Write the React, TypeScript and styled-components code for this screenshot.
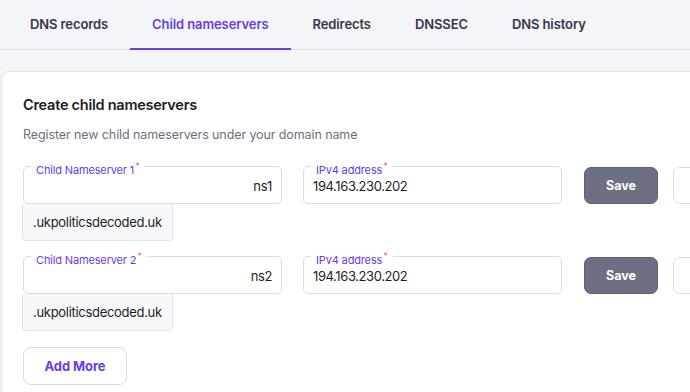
import React from 'react'
import styled, { createGlobalStyle } from 'styled-components'
import { Trash2 } from 'lucide-react'

const GlobalStyle = createGlobalStyle`
  body {
    margin: 0;
    background: #f4f5f8;
    font-family: Inter, "Noto Sans", sans-serif;
    color: #1d1e20;
    overflow: hidden;
  }
`

const Page = styled.div`
  width: 780px;
`

const Tabs = styled.div`
  display: flex;
  padding-left: 8px;
  border-bottom: 1px solid #dcdde4;
  height: 49px;
`

const Tab = styled.div<{ active?: boolean }>`
  padding: 0 22px;
  display: flex;
  align-items: center;
  font-size: 13px;
  font-weight: 600;
  letter-spacing: -0.1px;
  color: ${({ active }) => (active ? '#673de6' : '#36344d')};
  border-bottom: 2px solid ${({ active }) => (active ? '#673de6' : 'transparent')};
  margin-bottom: -1px;
`

const Card = styled.div`
  margin: 21px 0 0 1px;
  background: #fff;
  border: 1px solid #e3e4ea;
  border-radius: 8px;
  padding: 24px 21px 20px;
  display: flex;
  flex-direction: column;
`

const Title = styled.h2`
  margin: 0;
  font-size: 14.5px;
  font-weight: 600;
  letter-spacing: -0.25px;
`

const Subtitle = styled.p`
  margin: 14px 0 24px;
  font-size: 12.5px;
  letter-spacing: -0.1px;
  color: #6d7081;
`

const Entry = styled.div`
  display: flex;
  flex-direction: column;
  margin-bottom: 15px;
`

const FieldRow = styled.div`
  display: flex;
  align-items: center;
`

const Field = styled.div<{ align?: 'left' | 'right' }>`
  position: relative;
  flex: 0 0 259px;
  height: 38px;
  box-sizing: border-box;
  border: 1px solid #dadce0;
  border-radius: 5px;
  display: flex;
  align-items: center;
  justify-content: ${({ align }) => (align === 'right' ? 'flex-end' : 'flex-start')};
  padding: 2px 9px 0;
  font-size: 13px;
  letter-spacing: -0.4px;
  margin-right: 21px;
`

const Label = styled.span`
  position: absolute;
  top: -8px;
  left: 7px;
  background: #fff;
  padding: 0 5px;
  font-size: 11px;
  letter-spacing: -0.15px;
  line-height: 14px;
  color: #673de6;
`

const Star = styled.sup`
  color: #fc5185;
  font-size: 9px;
  margin-left: 1px;
`

const Suffix = styled.div`
  align-self: flex-start;
  margin-left: -1px;
  height: 37px;
  box-sizing: border-box;
  display: flex;
  align-items: center;
  padding: 0 10px;
  background: #f7f8fc;
  border: 1px solid #e3e4ea;
  border-top: none;
  border-radius: 0 0 4px 4px;
  font-size: 13px;
  letter-spacing: -0.3px;
`

const SaveButton = styled.button`
  flex-shrink: 0;
  width: 74px;
  height: 37px;
  margin: 0 15px 0 1px;
  background: #6d7083;
  color: #fff;
  border: 1px solid #5f6275;
  border-radius: 7px;
  font-family: inherit;
  font-size: 12.5px;
  font-weight: 700;
  cursor: pointer;
`

const DeleteButton = styled.button`
  flex-shrink: 0;
  width: 56px;
  height: 37px;
  display: flex;
  align-items: center;
  justify-content: center;
  background: #fff;
  color: #673de6;
  border: 1px solid #dadce0;
  border-radius: 7px;
  cursor: pointer;
`

const AddMore = styled.button`
  align-self: flex-start;
  width: 104px;
  height: 38px;
  margin-top: 1px;
  background: #fff;
  border: 1px solid #dadce0;
  border-radius: 8px;
  color: #673de6;
  font-family: inherit;
  font-size: 13px;
  letter-spacing: -0.1px;
  font-weight: 700;
`

const servers = [
  { name: 'ns1', ip: '194.163.230.202' },
  { name: 'ns2', ip: '194.163.230.202' },
]

const App = () => {
  return (
    <Page>
      <GlobalStyle />
      <Tabs>
        <Tab>DNS records</Tab>
        <Tab active>Child nameservers</Tab>
        <Tab>Redirects</Tab>
        <Tab>DNSSEC</Tab>
        <Tab>DNS history</Tab>
      </Tabs>
      <Card>
        <Title>Create child nameservers</Title>
        <Subtitle>Register new child nameservers under your domain name</Subtitle>
        {servers.map((s, i) => (
          <Entry key={s.name}>
            <FieldRow>
              <Field align='right'>
                <Label>
                  Child Nameserver {i + 1}
                  <Star>*</Star>
                </Label>
                {s.name}
              </Field>
              <Field>
                <Label>
                  IPv4 address
                  <Star>*</Star>
                </Label>
                {s.ip}
              </Field>
              <SaveButton>Save</SaveButton>
              <DeleteButton aria-label='Delete'>
                <Trash2 size={18} />
              </DeleteButton>
            </FieldRow>
            <Suffix>.ukpoliticsdecoded.uk</Suffix>
          </Entry>
        ))}
        <AddMore>Add More</AddMore>
      </Card>
    </Page>
  )
}

export default App
